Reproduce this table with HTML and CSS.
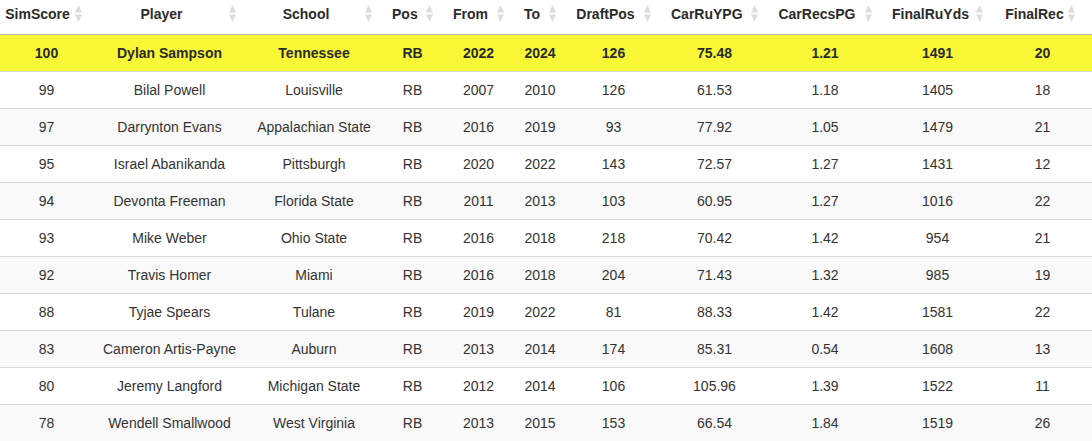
FILE: index.html
```html
<!DOCTYPE html>
<html>
<head>
<meta charset="utf-8">
<link rel="stylesheet" href="styles.css">
</head>
<body>
<table class="dt">
  <colgroup>
    <col class="c1"><col class="c2"><col class="c3"><col class="c4"><col class="c5"><col class="c6"><col class="c7"><col class="c8"><col class="c9"><col class="c10"><col class="c11">
  </colgroup>
  <thead>
    <tr>
      <th class="first">SimScore<svg class="sort" viewBox="0 0 7 17" width="7" height="17"><polygon points="3.5,0 7,7.5 0,7.5"/><polygon points="0,9.5 7,9.5 3.5,17"/></svg></th>
      <th>Player<svg class="sort" viewBox="0 0 7 17" width="7" height="17"><polygon points="3.5,0 7,7.5 0,7.5"/><polygon points="0,9.5 7,9.5 3.5,17"/></svg></th>
      <th>School<svg class="sort" viewBox="0 0 7 17" width="7" height="17"><polygon points="3.5,0 7,7.5 0,7.5"/><polygon points="0,9.5 7,9.5 3.5,17"/></svg></th>
      <th>Pos<svg class="sort" viewBox="0 0 7 17" width="7" height="17"><polygon points="3.5,0 7,7.5 0,7.5"/><polygon points="0,9.5 7,9.5 3.5,17"/></svg></th>
      <th>From<svg class="sort" viewBox="0 0 7 17" width="7" height="17"><polygon points="3.5,0 7,7.5 0,7.5"/><polygon points="0,9.5 7,9.5 3.5,17"/></svg></th>
      <th>To<svg class="sort" viewBox="0 0 7 17" width="7" height="17"><polygon points="3.5,0 7,7.5 0,7.5"/><polygon points="0,9.5 7,9.5 3.5,17"/></svg></th>
      <th>DraftPos<svg class="sort" viewBox="0 0 7 17" width="7" height="17"><polygon points="3.5,0 7,7.5 0,7.5"/><polygon points="0,9.5 7,9.5 3.5,17"/></svg></th>
      <th>CarRuYPG<svg class="sort" viewBox="0 0 7 17" width="7" height="17"><polygon points="3.5,0 7,7.5 0,7.5"/><polygon points="0,9.5 7,9.5 3.5,17"/></svg></th>
      <th>CarRecsPG<svg class="sort" viewBox="0 0 7 17" width="7" height="17"><polygon points="3.5,0 7,7.5 0,7.5"/><polygon points="0,9.5 7,9.5 3.5,17"/></svg></th>
      <th>FinalRuYds<svg class="sort" viewBox="0 0 7 17" width="7" height="17"><polygon points="3.5,0 7,7.5 0,7.5"/><polygon points="0,9.5 7,9.5 3.5,17"/></svg></th>
      <th class="last">FinalRec<svg class="sort" viewBox="0 0 7 17" width="7" height="17"><polygon points="3.5,0 7,7.5 0,7.5"/><polygon points="0,9.5 7,9.5 3.5,17"/></svg></th>
    </tr>
  </thead>
  <tbody>
    <tr class="hl"><td>100</td><td>Dylan Sampson</td><td>Tennessee</td><td>RB</td><td>2022</td><td>2024</td><td>126</td><td>75.48</td><td>1.21</td><td>1491</td><td>20</td></tr>
    <tr><td>99</td><td>Bilal Powell</td><td>Louisville</td><td>RB</td><td>2007</td><td>2010</td><td>126</td><td>61.53</td><td>1.18</td><td>1405</td><td>18</td></tr>
    <tr class="odd"><td>97</td><td>Darrynton Evans</td><td>Appalachian State</td><td>RB</td><td>2016</td><td>2019</td><td>93</td><td>77.92</td><td>1.05</td><td>1479</td><td>21</td></tr>
    <tr><td>95</td><td>Israel Abanikanda</td><td>Pittsburgh</td><td>RB</td><td>2020</td><td>2022</td><td>143</td><td>72.57</td><td>1.27</td><td>1431</td><td>12</td></tr>
    <tr class="odd"><td>94</td><td>Devonta Freeman</td><td>Florida State</td><td>RB</td><td>2011</td><td>2013</td><td>103</td><td>60.95</td><td>1.27</td><td>1016</td><td>22</td></tr>
    <tr><td>93</td><td>Mike Weber</td><td>Ohio State</td><td>RB</td><td>2016</td><td>2018</td><td>218</td><td>70.42</td><td>1.42</td><td>954</td><td>21</td></tr>
    <tr class="odd"><td>92</td><td>Travis Homer</td><td>Miami</td><td>RB</td><td>2016</td><td>2018</td><td>204</td><td>71.43</td><td>1.32</td><td>985</td><td>19</td></tr>
    <tr><td>88</td><td>Tyjae Spears</td><td>Tulane</td><td>RB</td><td>2019</td><td>2022</td><td>81</td><td>88.33</td><td>1.42</td><td>1581</td><td>22</td></tr>
    <tr class="odd"><td>83</td><td>Cameron Artis-Payne</td><td>Auburn</td><td>RB</td><td>2013</td><td>2014</td><td>174</td><td>85.31</td><td>0.54</td><td>1608</td><td>13</td></tr>
    <tr><td>80</td><td>Jeremy Langford</td><td>Michigan State</td><td>RB</td><td>2012</td><td>2014</td><td>106</td><td>105.96</td><td>1.39</td><td>1522</td><td>11</td></tr>
    <tr class="odd"><td>78</td><td>Wendell Smallwood</td><td>West Virginia</td><td>RB</td><td>2013</td><td>2015</td><td>153</td><td>66.54</td><td>1.84</td><td>1519</td><td>26</td></tr>
  </tbody>
</table>
</body>
</html>
```
FILE: styles.css
```css
html, body {
  margin: 0;
  padding: 0;
  background: #fff;
}
body {
  font-family: "Liberation Sans", Arial, Helvetica, sans-serif;
  font-size: 14px;
  color: #333;
}
.dt {
  width: 1092px;
  table-layout: fixed;
  border-collapse: collapse;
  border-spacing: 0;
}
.c1 { width: 93px; }
.c2 { width: 153px; }
.c3 { width: 136px; }
.c4 { width: 61px; }
.c5 { width: 71px; }
.c6 { width: 52px; }
.c7 { width: 95px; }
.c8 { width: 107px; }
.c9 { width: 114px; }
.c10 { width: 111px; }
.c11 { width: 99px; }

.dt th {
  position: relative;
  box-sizing: border-box;
  height: 34px;
  padding: 6px 26px 11px 10px;
  line-height: 16px;
  font-weight: bold;
  color: #2b2b2b;
  text-align: center;
  white-space: nowrap;
  border-bottom: 1px solid #b3b3b3;
}
.dt th.first {
  padding-left: 4px;
  padding-right: 22px;
}
.sort {
  position: absolute;
  right: 10px;
  top: 5px;
  fill: #dcdcdc;
}
.dt th.first .sort {
  right: 11px;
}
.dt th.last .sort {
  right: 17px;
}
.dt td {
  box-sizing: border-box;
  height: 37px;
  padding: 8px 10px;
  line-height: 20px;
  text-align: center;
  white-space: nowrap;
  border-top: 1px solid #d9d9d9;
}
.dt tbody tr:first-child td {
  border-top: none;
  height: 36px;
}
.dt tr.odd td {
  background: #f9f9f9;
}
.dt tr.hl td {
  background: #f8f836;
  font-weight: bold;
  color: #2b2b2b;
}
```
